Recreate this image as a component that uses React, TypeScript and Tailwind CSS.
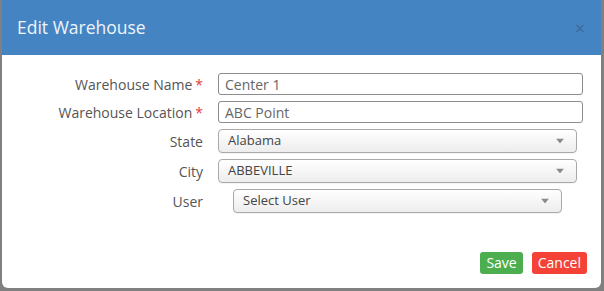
const Caret = () => (
  <svg width="8" height="5" viewBox="0 0 8 5" className="absolute right-[12px] top-1/2 -translate-y-1/2">
    <path d="M0 0 L8 0 L4 5 Z" fill="#8a8a8a" />
  </svg>
);

const Select = ({ value, className }: { value: string; className: string }) => (
  <div
    className={`relative h-[24px] rounded-[4px] border border-[#a9a9a9] bg-gradient-to-b from-white to-[#ededed] pl-[9px] flex items-center text-[13px] text-[#444] shadow-[0_1px_1px_rgba(0,0,0,0.05)] ${className}`}
  >
    {value}
    <Caret />
  </div>
);

const Label = ({ text, required }: { text: string; required?: boolean }) => (
  <div className="w-[201px] shrink-0 text-right text-[14px] text-[#555]">
    {text}
    {required && <span className="text-[#e53935] ml-[3px]">*</span>}
  </div>
);

const EditWarehouse = () => {
  return (
    <div className="w-[604px] h-[291px] bg-[#808080] pl-[2px] pr-[3px] pb-[3px] font-['Open_Sans',sans-serif]">
      <div className="w-[599px] h-[288px] bg-white rounded-b-[6px] flex flex-col">
        <div className="h-[55px] bg-[#4584c2] flex items-center justify-between pl-[15px] pr-[16px]">
          <div className="text-[17.5px] text-[#eef4fb]">Edit Warehouse</div>
          <div className="text-[18px] text-[#3a6b9e] leading-none">×</div>
        </div>

        <div className="pt-[18px] flex flex-col gap-[6px]">
          <div className="flex items-center gap-[15px] h-[22px]">
            <Label text="Warehouse Name" required />
            <div className="w-[365px] h-[22px] border border-[#8c8c8c] rounded-[3px] px-[6px] flex items-center text-[14px] text-[#666]">
              Center 1
            </div>
          </div>
          <div className="flex items-center gap-[15px] h-[22px]">
            <Label text="Warehouse Location" required />
            <div className="w-[365px] h-[22px] border border-[#8c8c8c] rounded-[3px] px-[6px] flex items-center text-[14px] text-[#666]">
              ABC Point
            </div>
          </div>
          <div className="flex items-center gap-[15px] h-[24px]">
            <Label text="State" />
            <Select value="Alabama" className="w-[359px]" />
          </div>
          <div className="flex items-center gap-[15px] h-[24px]">
            <Label text="City" />
            <Select value="ABBEVILLE" className="w-[359px]" />
          </div>
          <div className="flex items-center gap-[30px] h-[24px]">
            <Label text="User" />
            <Select value="Select User" className="w-[329px]" />
          </div>
        </div>

        <div className="mt-[39px] flex justify-end gap-[9px] pr-[14px]">
          <button className="h-[22px] px-[6px] rounded-[3px] bg-[#4cae4f] text-white text-[14px] leading-none">
            Save
          </button>
          <button className="h-[22px] px-[6px] rounded-[3px] bg-[#f44336] text-white text-[14px] leading-none">
            Cancel
          </button>
        </div>
      </div>
    </div>
  );
};

export default EditWarehouse;
